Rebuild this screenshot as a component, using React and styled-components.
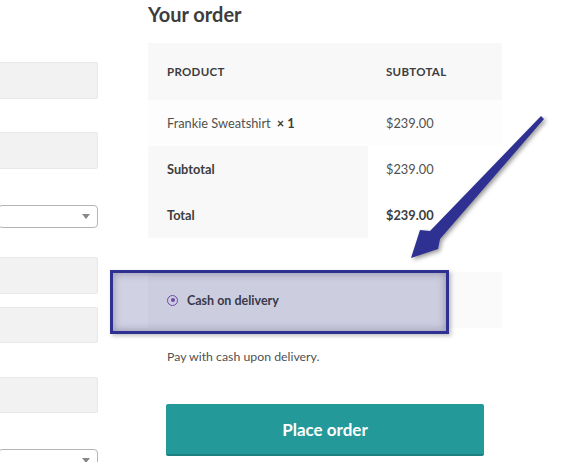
import React from "react";
import styled, { createGlobalStyle } from "styled-components";

const Global = createGlobalStyle`
  html, body { margin: 0; padding: 0; background: #fff; }
  body { font-family: "Lato", "Noto Sans", sans-serif; color: #515151; overflow: hidden; }
  * { box-sizing: border-box; }
`;

const Page = styled.div`
  position: relative;
  width: 574px;
  height: 462px;
  display: flex;
  align-items: flex-start;
  gap: 50px;
  overflow: hidden;
`;

const FormCol = styled.div`
  width: 100px;
  flex-shrink: 0;
  margin-left: -2px;
  display: flex;
  flex-direction: column;
  padding-top: 62px;
`;

const Input = styled.div`
  flex-shrink: 0;
  height: ${(p) => p.$h || 37}px;
  margin-bottom: ${(p) => p.$mb || 0}px;
  background: #f2f2f2;
  border: 1px solid #e8e8e8;
  border-radius: 2px;
`;

const Select = styled.div`
  flex-shrink: 0;
  position: relative;
  height: 23px;
  margin-bottom: ${(p) => p.$mb || 0}px;
  background: #fff;
  border: 1px solid #b5b5b5;
  border-radius: 4px;
  &::after {
    content: "";
    position: absolute;
    right: 7px;
    top: 8px;
    border-left: 4px solid transparent;
    border-right: 4px solid transparent;
    border-top: 5px solid #888;
  }
`;

const OrderCol = styled.div`
  width: 354px;
  flex-shrink: 0;
  display: flex;
  flex-direction: column;
`;

const Heading = styled.h3`
  margin: 0;
  padding-top: 1px;
  height: 43px;
  font-size: 20px;
  line-height: 26px;
  font-weight: 700;
  color: #3d3d3d;
`;

const Table = styled.div`
  display: grid;
  grid-template-columns: 220px 134px;
`;

const Cell = styled.div`
  height: ${(p) => p.$h || 46}px;
  display: flex;
  align-items: center;
  padding-left: ${(p) => (p.$right ? 18 : 19)}px;
  background: ${(p) => p.$bg || "#fff"};
  font-size: ${(p) => (p.$caps ? 11.5 : 12.8)}px;
  font-weight: ${(p) => (p.$bold ? 700 : 400)};
  color: ${(p) => (p.$bold ? "#3d3d3d" : "#515151")};
  text-transform: ${(p) => (p.$caps ? "uppercase" : "none")};
  letter-spacing: ${(p) => (p.$caps ? "0.3px" : "0")};
`;

const Qty = styled.strong`
  margin-left: 6px;
  font-weight: 700;
  color: #3d3d3d;
`;

const Payment = styled.div`
  margin-top: 34px;
  height: 56px;
  background: #fafafa;
  display: flex;
  align-items: center;
  padding-left: 19px;
  gap: 9px;
  font-size: 12.5px;
  font-weight: 700;
  color: #3d3d3d;
`;

const Radio = styled.span`
  width: 11px;
  height: 11px;
  border-radius: 50%;
  border: 1.5px solid #7f54b3;
  display: flex;
  align-items: center;
  justify-content: center;
  &::after {
    content: "";
    width: 4px;
    height: 4px;
    border-radius: 50%;
    background: #7f54b3;
  }
`;

const Note = styled.p`
  margin: 20px 0 0 19px;
  font-size: 12.3px;
  line-height: 18px;
  color: #515151;
`;

const PlaceButton = styled.button`
  margin: 38px 0 0 18px;
  width: 318px;
  height: 52px;
  border: none;
  border-bottom: 2px solid #1d8080;
  border-radius: 2px;
  background: #23999a;
  color: #fff;
  font-family: inherit;
  font-size: 17px;
  font-weight: 700;
`;

const Highlight = styled.div`
  position: absolute;
  left: 110px;
  top: 270px;
  width: 339px;
  height: 64px;
  border: 3px solid #2e3192;
  background: rgba(42, 46, 122, 0.22);
  box-shadow: inset 0 0 8px rgba(20, 20, 60, 0.35), 2px 2px 4px rgba(0, 0, 0, 0.25);
  pointer-events: none;
`;

const ArrowSvg = styled.svg`
  position: absolute;
  left: 0;
  top: 0;
  filter: drop-shadow(2px 2px 2px rgba(0, 0, 0, 0.4));
  pointer-events: none;
`;

export default function App() {
  return (
    <>
      <Global />
      <Page>
        <FormCol>
          <Input $h={37} $mb={33} />
          <Input $h={37} $mb={36} />
          <Select $mb={29} />
          <Input $h={37} $mb={13} />
          <Input $h={36} $mb={34} />
          <Input $h={36} $mb={36} />
          <Select />
        </FormCol>
        <OrderCol>
          <Heading>Your order</Heading>
          <Table>
            <Cell $h={57} $bg="#f8f8f8" $bold $caps>Product</Cell>
            <Cell $h={57} $bg="#f8f8f8" $bold $caps $right>Subtotal</Cell>
            <Cell $bg="#fdfdfd">
              Frankie Sweatshirt<Qty>× 1</Qty>
            </Cell>
            <Cell $bg="#fdfdfd" $right>$239.00</Cell>
            <Cell $bg="#f8f8f8" $bold>Subtotal</Cell>
            <Cell $right>$239.00</Cell>
            <Cell $bg="#f8f8f8" $bold>Total</Cell>
            <Cell $right $bold>$239.00</Cell>
          </Table>
          <Payment>
            <Radio />
            Cash on delivery
          </Payment>
          <Note>Pay with cash upon delivery.</Note>
          <PlaceButton>Place order</PlaceButton>
        </OrderCol>
        <Highlight />
        <ArrowSvg width="574" height="462" viewBox="0 0 574 462">
          <polygon
            points="541,116 544,119 440,239 438,249 411,258 420,230 430,231"
            fill="#2e3192"
          />
        </ArrowSvg>
      </Page>
    </>
  );
}
